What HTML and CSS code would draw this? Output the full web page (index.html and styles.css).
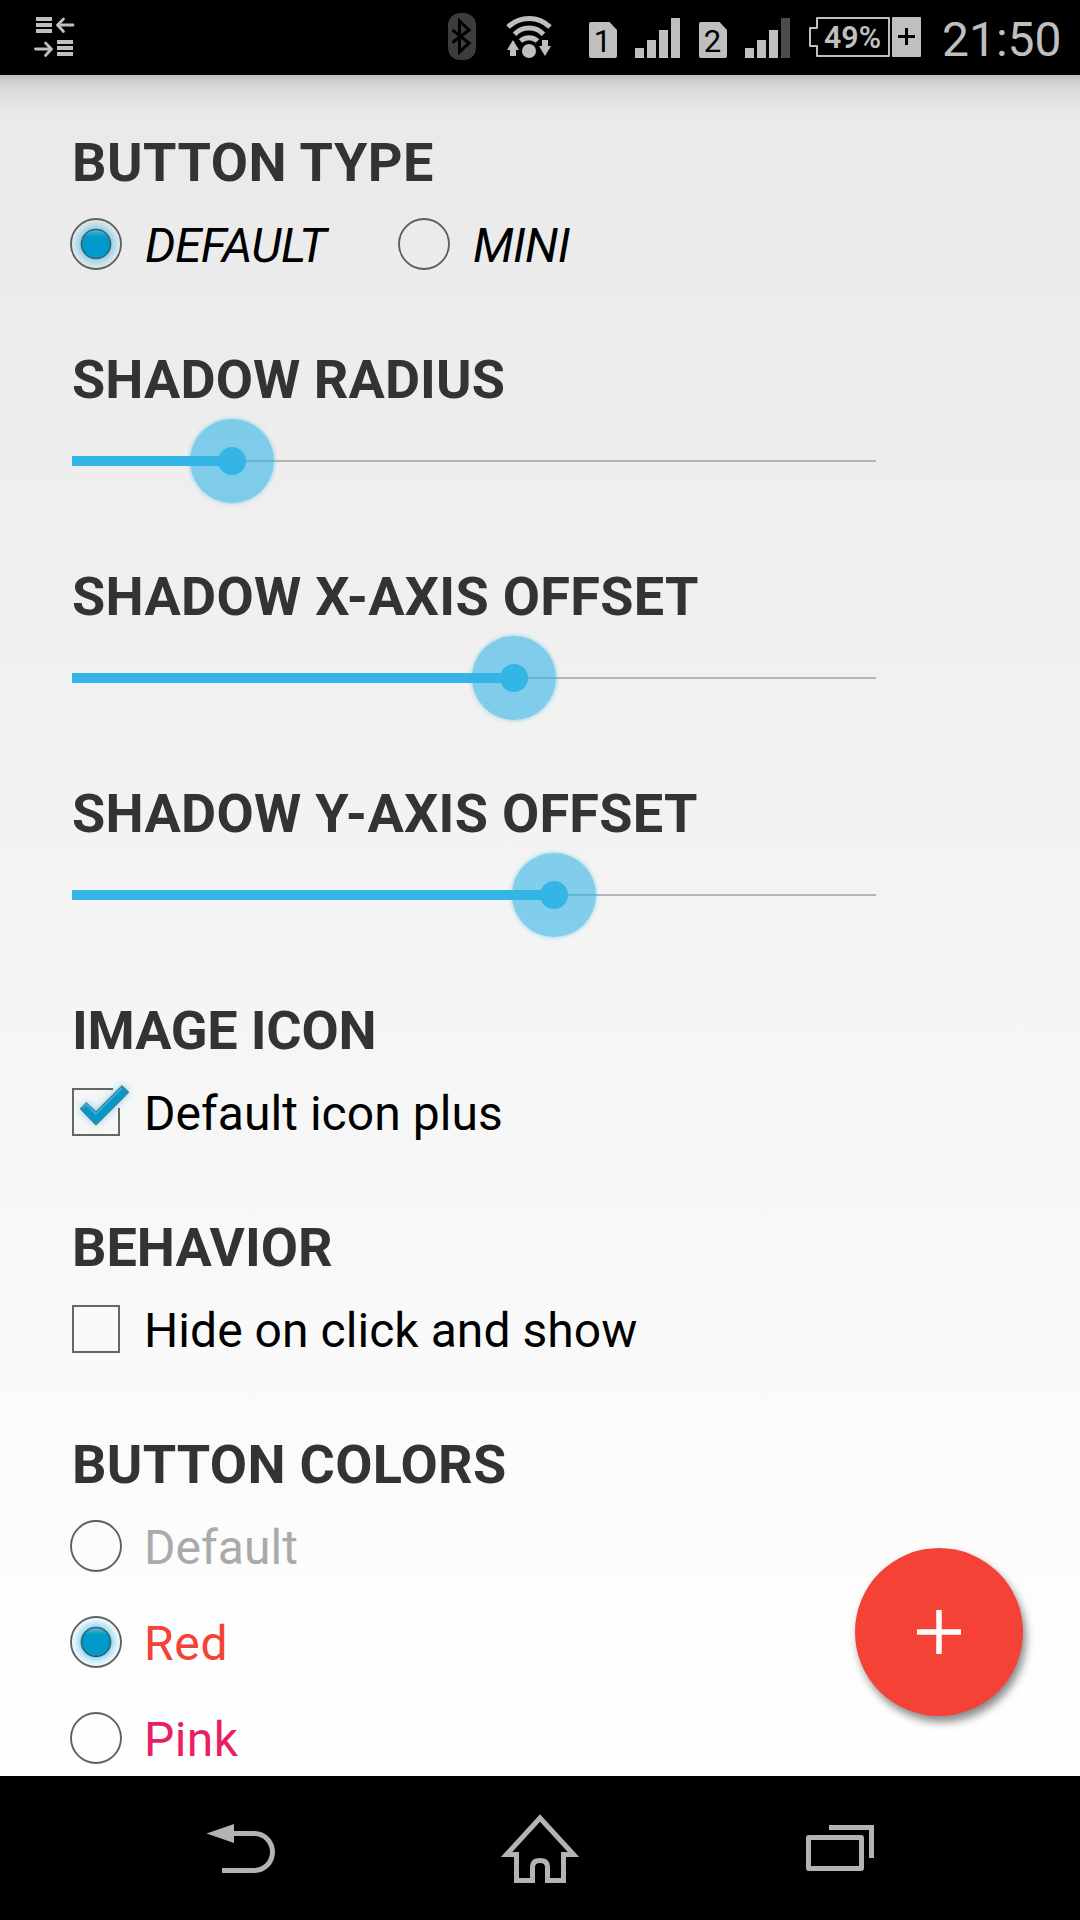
FILE: index.html
```html
<!DOCTYPE html>
<html lang="en">
<head>
<meta charset="utf-8">
<title>Floating action button settings</title>
<link rel="stylesheet" href="styles.css">
</head>
<body>
<svg class="defs" width="0" height="0" aria-hidden="true">
  <defs>
    <radialGradient id="glow">
      <stop offset="0.55" stop-color="#33b5e5" stop-opacity="0.6"/>
      <stop offset="0.8" stop-color="#33b5e5" stop-opacity="0.26"/>
      <stop offset="1" stop-color="#33b5e5" stop-opacity="0.04"/>
    </radialGradient>
    <linearGradient id="dot" x1="0" y1="0" x2="0" y2="1">
      <stop offset="0" stop-color="#5cb9db"/>
      <stop offset="0.25" stop-color="#0099cc"/>
      <stop offset="1" stop-color="#0099cc"/>
    </linearGradient>
    <filter id="soft" x="-50%" y="-50%" width="200%" height="200%">
      <feGaussianBlur stdDeviation="4"/>
    </filter>
    <symbol id="radio-off" viewBox="0 0 52 52">
      <circle cx="26" cy="26" r="25" fill="none" stroke="#5f5f5f" stroke-width="1.9"/>
    </symbol>
    <symbol id="radio-on" viewBox="0 0 52 52">
      <circle cx="26" cy="26" r="24" fill="url(#glow)"/>
      <circle cx="26" cy="26" r="25" fill="none" stroke="#5f5f5f" stroke-width="1.9"/>
      <circle cx="26" cy="26" r="14.6" fill="url(#dot)" stroke="#3f5f6b" stroke-width="1.5"/>
    </symbol>
  </defs>
</svg>

<header class="status">
  <svg class="sync" width="42" height="75" viewBox="34 0 42 75">
    <g fill="#bfbfbf"><path d="M36 17h16v4H36zM36 23h16v4H36zM36 29h16v4H36zM57 40h16v4H57zM57 46h16v4H57zM57 52h16v4H57z"/></g>
    <g fill="none" stroke="#bfbfbf" stroke-width="2.8" stroke-linecap="round" stroke-linejoin="round"><path d="M73 25H58M63.5 19L57.5 25L63.5 31.500M35.500 49H51M45.500 43L51.500 49L45.500 55.500"/></g>
  </svg>
  <div class="status-right">
    <svg class="bt" width="28" height="75" viewBox="448 0 28 75">
      <rect x="448" y="13" width="28" height="47" rx="12" fill="#3c3c3c"/>
      <path d="M452.500 30L469 43L459.500 52V21L469 30L452.500 42.500" fill="none" stroke="#000" stroke-width="3"/>
    </svg>
    <svg class="wifi" width="46" height="75" viewBox="506 0 46 75">
      <g fill="none" stroke="#bfbfbf" stroke-width="5">
        <path d="M508 27A30 30 0 0 1 550 27M514.500 34.300A20 20 0 0 1 543.500 34.300M520.500 41A12.500 12.500 0 0 1 537.500 41"/>
      </g>
      <g fill="#bfbfbf"><circle cx="529" cy="51" r="7"/><path d="M513 40l6 10h-3v6h-6v-6h-3zM545 56l-6-10h3v-6h6v6h3z"/></g>
    </svg>
    <svg class="sim" width="28" height="75" viewBox="0 0 28 75">
      <path d="M2 22H20.500L28 30V56a2 2 0 0 1-2 2H2a2 2 0 0 1-2-2V24a2 2 0 0 1 2-2z" fill="#bfbfbf"/>
      <text x="13.500" y="52" class="sim-no">1</text>
    </svg>
    <svg class="bars" width="45" height="75" viewBox="0 0 45 75"><path d="M0 48h9v10H0zM12 40h9v18h-9zM24 30h9v28h-9zM36 18h9v40h-9z" fill="#bfbfbf"/></svg>
    <svg class="sim second" width="28" height="75" viewBox="0 0 28 75">
      <path d="M2 22H20.500L28 30V56a2 2 0 0 1-2 2H2a2 2 0 0 1-2-2V24a2 2 0 0 1 2-2z" fill="#bfbfbf"/>
      <text x="13.500" y="52" class="sim-no">2</text>
    </svg>
    <svg class="bars" width="45" height="75" viewBox="0 0 45 75"><path d="M0 48h9v10H0zM12 40h9v18h-9zM24 30h9v28h-9z" fill="#bfbfbf"/><path d="M36 18h9v40h-9z" fill="#4c4c4c"/></svg>
    <svg class="battery" width="112" height="75" viewBox="809 0 112 75">
      <path d="M817 18H889V56H817V46H810V28H817Z" fill="none" stroke="#bfbfbf" stroke-width="2" stroke-linejoin="round"/>
      <rect x="892" y="17" width="29" height="40" rx="1" fill="#bfbfbf"/>
      <path d="M898 36.500h17M906.500 28v17" stroke="#000" stroke-width="3"/>
      <text x="824" y="48" class="percent" textLength="57" lengthAdjust="spacingAndGlyphs">49%</text>
    </svg>
    <span class="clock">21:50</span>
  </div>
</header>

<main class="content">
  <section class="group">
    <h2 class="t-type">BUTTON TYPE</h2>
    <div class="row italic">
      <label class="option"><svg class="radio"><use href="#radio-on"/></svg><span>DEFAULT</span></label>
      <label class="option"><svg class="radio"><use href="#radio-off"/></svg><span>MINI</span></label>
    </div>
  </section>
  <section class="group">
    <h2 class="t-radius">SHADOW RADIUS</h2>
    <div class="row"><div class="slider"><div class="fill" style="width:19.9%"><i class="thumb"></i></div></div></div>
  </section>
  <section class="group">
    <h2 class="t-offset">SHADOW X-AXIS OFFSET</h2>
    <div class="row"><div class="slider"><div class="fill" style="width:55%"><i class="thumb"></i></div></div></div>
  </section>
  <section class="group">
    <h2 class="t-offset">SHADOW Y-AXIS OFFSET</h2>
    <div class="row"><div class="slider"><div class="fill" style="width:60%"><i class="thumb"></i></div></div></div>
  </section>
  <section class="group">
    <h2 class="t-icon">IMAGE ICON</h2>
    <label class="row option">
      <svg class="check" width="48" height="48" viewBox="0 0 48 48">
        <path d="M8 21L14.300 14.500L24 24L50-2.500L57 4L24 37Z" fill="#33b5e5" opacity="0.65" filter="url(#soft)"/>
        <path d="M41 1H1V47H47V20" fill="none" stroke="#666" stroke-width="2"/>
        <path d="M8.500 20.700L14.300 14.800L24 24L50-2L56.500 4.200L24 36.700Z" fill="#0099cc" stroke="#4b7f92" stroke-width="1.300"/>
        <path d="M10.500 20L14.300 16.500L24 26L50 0" fill="none" stroke="#45b3da" stroke-width="1.300"/>
      </svg>
      <span>Default icon plus</span>
    </label>
  </section>
  <section class="group">
    <h2>BEHAVIOR</h2>
    <label class="row option">
      <svg class="check" width="48" height="48" viewBox="0 0 48 48"><path d="M1 1H47V47H1Z" fill="none" stroke="#666" stroke-width="2"/></svg>
      <span>Hide on click and show</span>
    </label>
  </section>
  <section class="group">
    <h2 class="t-colors">BUTTON COLORS</h2>
    <label class="row option gray"><svg class="radio"><use href="#radio-off"/></svg><span>Default</span></label>
    <label class="row option red"><svg class="radio"><use href="#radio-on"/></svg><span>Red</span></label>
    <label class="row option pink"><svg class="radio"><use href="#radio-off"/></svg><span>Pink</span></label>
  </section>
  <button class="fab" aria-label="Add">
    <svg width="44" height="44" viewBox="0 0 44 44"><path d="M0 22H44M22 0V44" stroke="#fff" stroke-width="5.500"/></svg>
  </button>
</main>

<nav class="navbar">
  <svg width="120" height="144" viewBox="180 1776 120 144">
    <path d="M206.500 1833.500L234 1824V1843Z" fill="#b3b3b3"/>
    <path d="M233 1833.500H254.500A18 18.500 0 0 1 254.500 1870.500H222" fill="none" stroke="#b3b3b3" stroke-width="5"/>
  </svg>
  <svg width="120" height="144" viewBox="480 1776 120 144">
    <path d="M540 1818L573.500 1854.500H563.500V1880.500H547.500V1867Q547.500 1860.500 540 1860.500Q532.500 1860.500 532.500 1867V1880.500H516.500V1854.500H506.500Z" fill="none" stroke="#b3b3b3" stroke-width="5"/>
  </svg>
  <svg width="120" height="144" viewBox="780 1776 120 144">
    <g fill="none" stroke="#b3b3b3" stroke-width="5"><rect x="808.500" y="1837.500" width="53" height="31" rx="0.500"/><path d="M829 1827.500H871.500V1858"/></g>
  </svg>
</nav>
</body>
</html>
```
FILE: styles.css
```css
* {
  box-sizing: border-box;
}

body {
  margin: 0;
  width: 1080px;
  height: 1920px;
  display: flex;
  flex-direction: column;
  overflow: hidden;
  background: #000;
  font-family: Roboto, "Noto Sans", sans-serif;
}

svg {
  display: block;
  flex: none;
}

.defs {
  position: absolute;
}

/* Status bar */
.status {
  flex: none;
  height: 75px;
  padding: 0 0 0 34px;
  display: flex;
  justify-content: space-between;
  background: #000;
  color: #bfbfbf;
}

.status-right {
  display: flex;
  width: 632px;
}

.wifi { margin-left: 30px; }
.sim { margin-left: 37px; }
.sim.second { margin-left: 19px; }
.bars { margin-left: 18px; }
.battery { margin-left: 19px; }

.sim-no {
  font-size: 31px;
  text-anchor: middle;
  fill: #000;
}

.percent {
  font-size: 31px;
  font-weight: 600;
  fill: #bfbfbf;
}

.clock {
  margin-left: 21px;
  font-size: 48px;
  line-height: 80px;
}

/* Settings list */
.content {
  position: relative;
  flex: none;
  height: 1701px;
  padding: 56px 72px 0;
  overflow: hidden;
  background:
    linear-gradient(#c4c4c4 0 3px, #cacaca 3px, rgba(214, 214, 214, 0.8) 13px, rgba(232, 232, 232, 0) 40px),
    linear-gradient(#e9e9e9, #fff);
}

.group {
  padding-bottom: 56px;
}

h2 {
  margin: 0;
  height: 65px;
  font-size: 54px;
  line-height: 64px;
  font-weight: 700;
  color: #333;
  white-space: nowrap;
}

.t-type { letter-spacing: 0.5px; }
.t-radius { letter-spacing: 0.1px; }
.t-offset { letter-spacing: 0.3px; }
.t-icon { letter-spacing: -0.2px; }
.t-colors { letter-spacing: 0.3px; }

.row {
  display: flex;
  align-items: center;
  height: 96px;
  font-size: 48px;
  color: #000;
}

.option {
  display: flex;
  align-items: center;
  gap: 24px;
  white-space: nowrap;
}

.row .option {
  width: 328px;
}

.option span {
  padding-top: 3px;
  letter-spacing: 0.05px;
}

.italic { font-style: italic; }
.italic span { padding-left: 1px; letter-spacing: -0.6px; }
.gray { color: #aaa; }
.red { color: #f44336; }
.red span { letter-spacing: 0.7px; }
.pink { color: #e91e63; }
.pink span { letter-spacing: 0.4px; }

.radio {
  width: 52px;
  height: 52px;
  margin: 0 -2px;
}

.check {
  overflow: visible;
}

/* Sliders */
.slider {
  width: 804px;
  height: 10px;
  background: linear-gradient(#b5b5b5, #b5b5b5) center / 100% 2px no-repeat;
}

.fill {
  position: relative;
  height: 10px;
  background: #33b5e5;
}

.thumb {
  position: absolute;
  top: -37px;
  right: -42px;
  width: 84px;
  height: 84px;
  border-radius: 50%;
  background: radial-gradient(circle, #33b5e5 13.5px, rgba(51, 181, 229, 0.6) 14.5px);
  box-shadow: 0 0 4px rgba(51, 181, 229, 0.6);
}

/* Floating action button */
.fab {
  position: absolute;
  left: 855px;
  top: 1473px;
  width: 168px;
  height: 168px;
  padding: 0;
  border: 0;
  border-radius: 50%;
  display: flex;
  align-items: center;
  justify-content: center;
  background: #f44336;
  box-shadow: 3px 6px 8px rgba(0, 0, 0, 0.46);
}

/* Navigation bar */
.navbar {
  flex: none;
  height: 144px;
  padding: 0 180px;
  display: flex;
  justify-content: space-between;
  background: #000;
}
```
